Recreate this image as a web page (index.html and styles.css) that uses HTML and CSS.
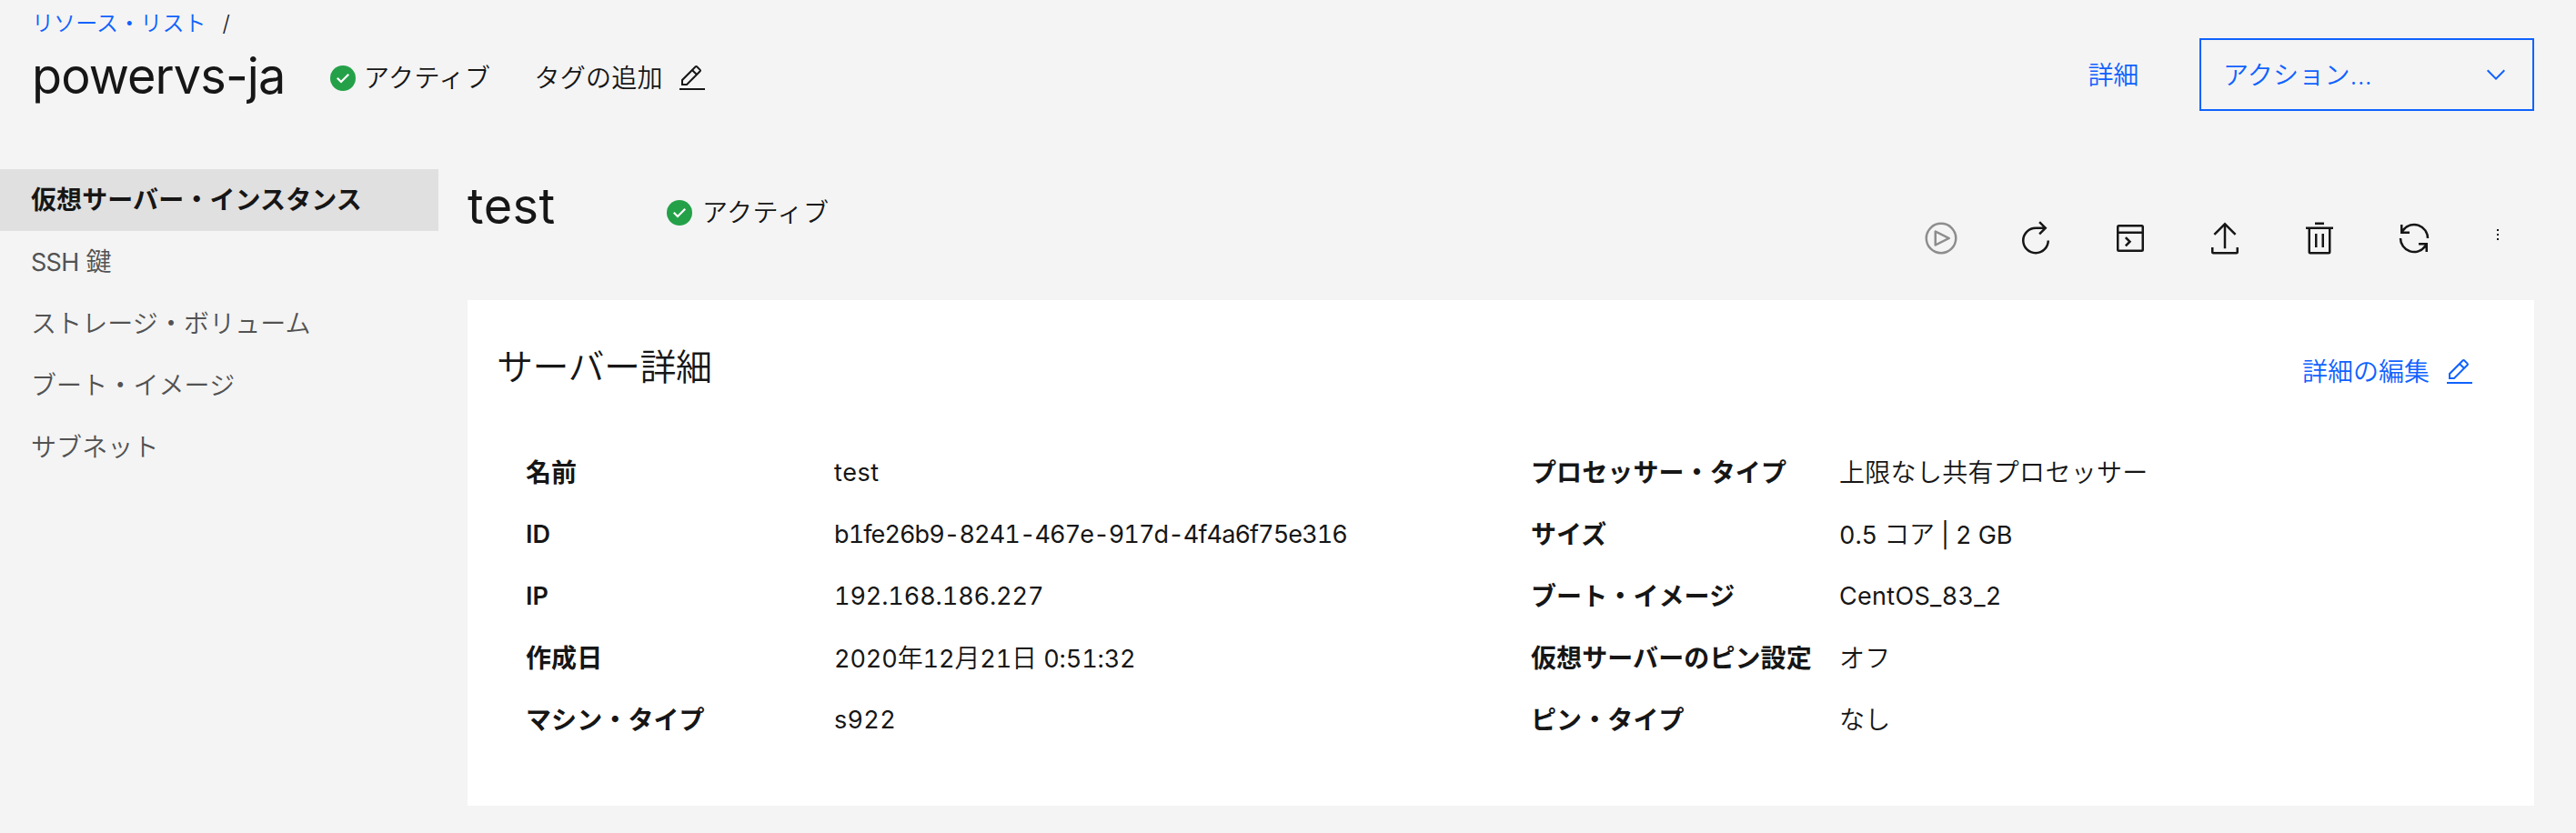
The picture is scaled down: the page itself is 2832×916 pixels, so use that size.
FILE: index.html
```html
<!DOCTYPE html>
<html lang="ja">
<head>
    <meta charset="UTF-8">
    <title>powervs-ja</title>
    <link rel="stylesheet" href="styles.css">
</head>
<body>
    <!-- Icons used more than once -->
    <svg class="sprite">
        <symbol id="check" viewBox="0 0 32 32">
            <circle cx="16" cy="16" r="14" fill="#24a148"/>
            <path fill="#fff" d="M14 21.59l-5-5L10.59 15 14 18.41 21.41 11l1.596 1.586z"/>
        </symbol>
        <symbol id="edit" viewBox="0 0 32 32">
            <path d="M2 27H30V29H2z"/>
            <path fill-rule="evenodd" d="M25.4 9c.8-.8.8-2 0-2.8l-3.6-3.6c-.8-.8-2-.8-2.8 0l-15 15V24h6.4L25.4 9zM20.4 4L24 7.6l-3 3L17.4 7 20.4 4zM6 22v-3.6l10-10 3.6 3.6-10 10H6z"/>
        </symbol>
    </svg>

    <!-- Page header -->
    <header class="page-header">
        <div class="header-left">
            <nav class="breadcrumb">
                <a href="#">リソース・リスト</a>
                <span class="slash">/</span>
            </nav>
            <div class="title-row">
                <h1>powervs-ja</h1>
                <div class="status">
                    <svg class="icon"><use href="#check"/></svg>
                    <span>アクティブ</span>
                </div>
                <div class="tags">
                    <span>タグの追加</span>
                    <svg class="icon"><use href="#edit"/></svg>
                </div>
            </div>
        </div>
        <div class="header-right">
            <a href="#" class="detail-link">詳細</a>
            <button class="actions">
                <span>アクション...</span>
                <svg class="icon" viewBox="0 0 16 16"><path d="M8 11L3 6 3.7 5.3 8 9.6 12.3 5.3 13 6z"/></svg>
            </button>
        </div>
    </header>

    <div class="layout">
        <!-- Side navigation -->
        <nav class="side-nav">
            <a href="#" class="active">仮想サーバー・インスタンス</a>
            <a href="#"><span class="latin ssh">SSH</span> 鍵</a>
            <a href="#">ストレージ・ボリューム</a>
            <a href="#">ブート・イメージ</a>
            <a href="#">サブネット</a>
        </nav>

        <main class="content">
            <div class="instance-header">
                <h2>test</h2>
                <div class="status">
                    <svg class="icon"><use href="#check"/></svg>
                    <span>アクティブ</span>
                </div>
                <div class="toolbar">
                    <svg class="disabled" viewBox="0 0 32 32"><path d="M11 23a1 1 0 01-1-1V10a1 1 0 011.447-.894l12 6a1 1 0 010 1.788l-12 6A1 1 0 0111 23zm1-11.382v8.764L20.764 16z"/><path d="M16 4A12 12 0 114 16 12 12 0 0116 4m0-2a14 14 0 1014 14A14 14 0 0016 2z"/></svg>
                    <svg viewBox="0 0 32 32"><path d="M26 18A10 10 0 1116 8h6.182l-3.584 3.585L20 13l6-6-6-6-1.402 1.415L22.185 6H16A12 12 0 1028 18z"/></svg>
                    <svg viewBox="0 0 32 32"><path class="line" d="M6 5H26a1 1 0 011 1V26a1 1 0 01-1 1H6a1 1 0 01-1-1V6a1 1 0 011-1zM5 11H27M11.9 15.3l3.7 3.7-3.7 3.7"/></svg>
                    <svg viewBox="0 0 32 32"><path d="M26 24v4H6v-4H4v4a2 2 0 002 2H26a2 2 0 002-2V24zM6 12l1.41 1.41L15 5.83V25h2V5.83l7.59 7.58L26 12 16 2z"/></svg>
                    <svg viewBox="0 0 32 32"><path d="M12 12H14V24H12zM18 12H20V24H18zM12 2H20V4H12z"/><path fill-rule="evenodd" d="M4 6V8H6V28a2 2 0 002 2H24a2 2 0 002-2V8h2V6zM8 28V8H24V28z"/></svg>
                    <svg viewBox="0 0 32 32"><path d="M12 10H6.78A11 11 0 0127 16h2A13 13 0 006 7.68V4H4v8h8zM20 22h5.22A11 11 0 015 16H3a13 13 0 0023 8.32V28h2V20H20z"/></svg>
                    <svg class="overflow" viewBox="0 0 16 16"><path d="M7 2h2v2H7zM7 7h2v2H7zM7 12h2v2H7z"/></svg>
                </div>
            </div>

            <!-- Server details -->
            <section class="card">
                <div class="card-header">
                    <h3>サーバー詳細</h3>
                    <a href="#" class="edit-link">
                        <span>詳細の編集</span>
                        <svg class="icon"><use href="#edit"/></svg>
                    </a>
                </div>
                <div class="details">
                    <dl>
                        <dt>名前</dt><dd class="latin name">test</dd>
                        <dt class="latin">ID</dt><dd class="latin uuid">b1fe26b9-8241-467e-917d-4f4a6f75e316</dd>
                        <dt class="latin">IP</dt><dd class="latin ip">192.168.186.227</dd>
                        <dt>作成日</dt><dd class="mixed"><span class="latin">2020</span>年<span class="latin">12</span>月<span class="latin">21</span>日<span class="latin"> 0:51:32</span></dd>
                        <dt>マシン・タイプ</dt><dd class="latin">s922</dd>
                    </dl>
                    <dl>
                        <dt>プロセッサー・タイプ</dt><dd>上限なし共有プロセッサー</dd>
                        <dt>サイズ</dt><dd class="mixed"><span class="latin">0.5 </span>コア<span class="latin"> | 2 GB</span></dd>
                        <dt>ブート・イメージ</dt><dd class="latin">CentOS_83_2</dd>
                        <dt>仮想サーバーのピン設定</dt><dd>オフ</dd>
                        <dt>ピン・タイプ</dt><dd>なし</dd>
                    </dl>
                </div>
            </section>
        </main>
    </div>
</body>
</html>
```
FILE: styles.css
```css
* {
    box-sizing: border-box;
}

body {
    margin: 0;
    background-color: #f4f4f4;
    color: #161616;
    font-family: Inter, "Noto Sans CJK JP", sans-serif;
    font-size: 28px;
    font-weight: 350;
    line-height: 36px;
    white-space: nowrap;
}

h1, h2, h3, dl, dd {
    margin: 0;
}

a {
    color: #0f62fe;
    text-decoration: none;
}

svg {
    display: block;
    flex: none;
    fill: currentColor;
}

.sprite {
    display: none;
}

.icon {
    width: 32px;
    height: 32px;
}

.latin {
    font-size: 27px;
    font-weight: 400;
    font-feature-settings: "tnum";
}

/* Page header */
.page-header {
    display: flex;
    justify-content: space-between;
    height: 186px;
    padding: 0 46px 0 35px;
}

.breadcrumb {
    display: flex;
    gap: 18px;
    padding-top: 8px;
    font-size: 24px;
    letter-spacing: 0.1px;
}

.title-row {
    display: flex;
    align-items: center;
    height: 84px;
}

h1, h2 {
    font-size: 54px;
    font-weight: 400;
    line-height: 64px;
}

h1 {
    width: 326px;
    margin-top: -4px;
    letter-spacing: -0.9px;
}

.status {
    display: flex;
    align-items: center;
    gap: 7px;
    letter-spacing: 0.5px;
}

.tags {
    display: flex;
    align-items: center;
    gap: 16px;
    margin-left: 48px;
    letter-spacing: 0.3px;
}

.header-right {
    display: flex;
    align-items: center;
    gap: 67px;
    height: 80px;
    margin-top: 42px;
}

.detail-link {
    padding-top: 2px;
    letter-spacing: -0.3px;
}

.actions {
    display: flex;
    align-items: center;
    justify-content: space-between;
    width: 368px;
    height: 80px;
    padding: 0 24px;
    border: 2px solid #0f62fe;
    background: none;
    color: #0f62fe;
    font: inherit;
    letter-spacing: 0.2px;
}

.actions span {
    padding-top: 1px;
}

/* Layout */
.layout {
    display: flex;
}

.side-nav {
    width: 482px;
    flex: none;
}

.side-nav a {
    display: block;
    height: 68px;
    padding-left: 34px;
    line-height: 69px;
    color: #525252;
    letter-spacing: 0.1px;
}

.side-nav .active {
    background-color: #e0e0e0;
    color: #161616;
    font-weight: 600;
}

.side-nav .ssh {
    letter-spacing: -0.7px;
}

.content {
    flex: 1;
    min-width: 0;
    margin: 0 46px 0 32px;
}

.instance-header {
    display: flex;
    height: 144px;
}

h2 {
    width: 217px;
    padding-top: 9px;
    letter-spacing: 0.5px;
}

.instance-header .status {
    height: 96px;
    gap: 9px;
}

.toolbar {
    display: flex;
    gap: 64px;
    margin: 56px 32px 0 auto;
}

.toolbar svg {
    width: 40px;
    height: 40px;
}

.toolbar .disabled {
    color: #8d8d8d;
}

.toolbar .overflow {
    width: 16px;
    height: 16px;
    margin-top: 8px;
}

.line {
    fill: none;
    stroke: currentColor;
    stroke-width: 2;
}

/* Server details card */
.card {
    height: 556px;
    padding: 44px 66px 0 32px;
    background-color: #fff;
}

.card-header {
    display: flex;
    justify-content: space-between;
    height: 112px;
}

h3 {
    font-size: 40px;
    font-weight: 350;
    line-height: 60px;
    letter-spacing: -0.5px;
}

.edit-link {
    display: flex;
    align-items: center;
    gap: 17px;
    height: 70px;
}

.details {
    display: grid;
    grid-template-columns: 1105px 1fr;
    padding-left: 32px;
}

dl {
    display: grid;
    grid-template-columns: 339px 1fr;
    grid-auto-rows: 68px;
    line-height: 68px;
}

dt, dt.latin {
    font-weight: 600;
    letter-spacing: 0.1px;
}

dd {
    letter-spacing: 0.3px;
}

.name {
    letter-spacing: 0.6px;
}

.uuid {
    letter-spacing: -0.9px;
}

.ip, .mixed {
    letter-spacing: -0.1px;
}
```
